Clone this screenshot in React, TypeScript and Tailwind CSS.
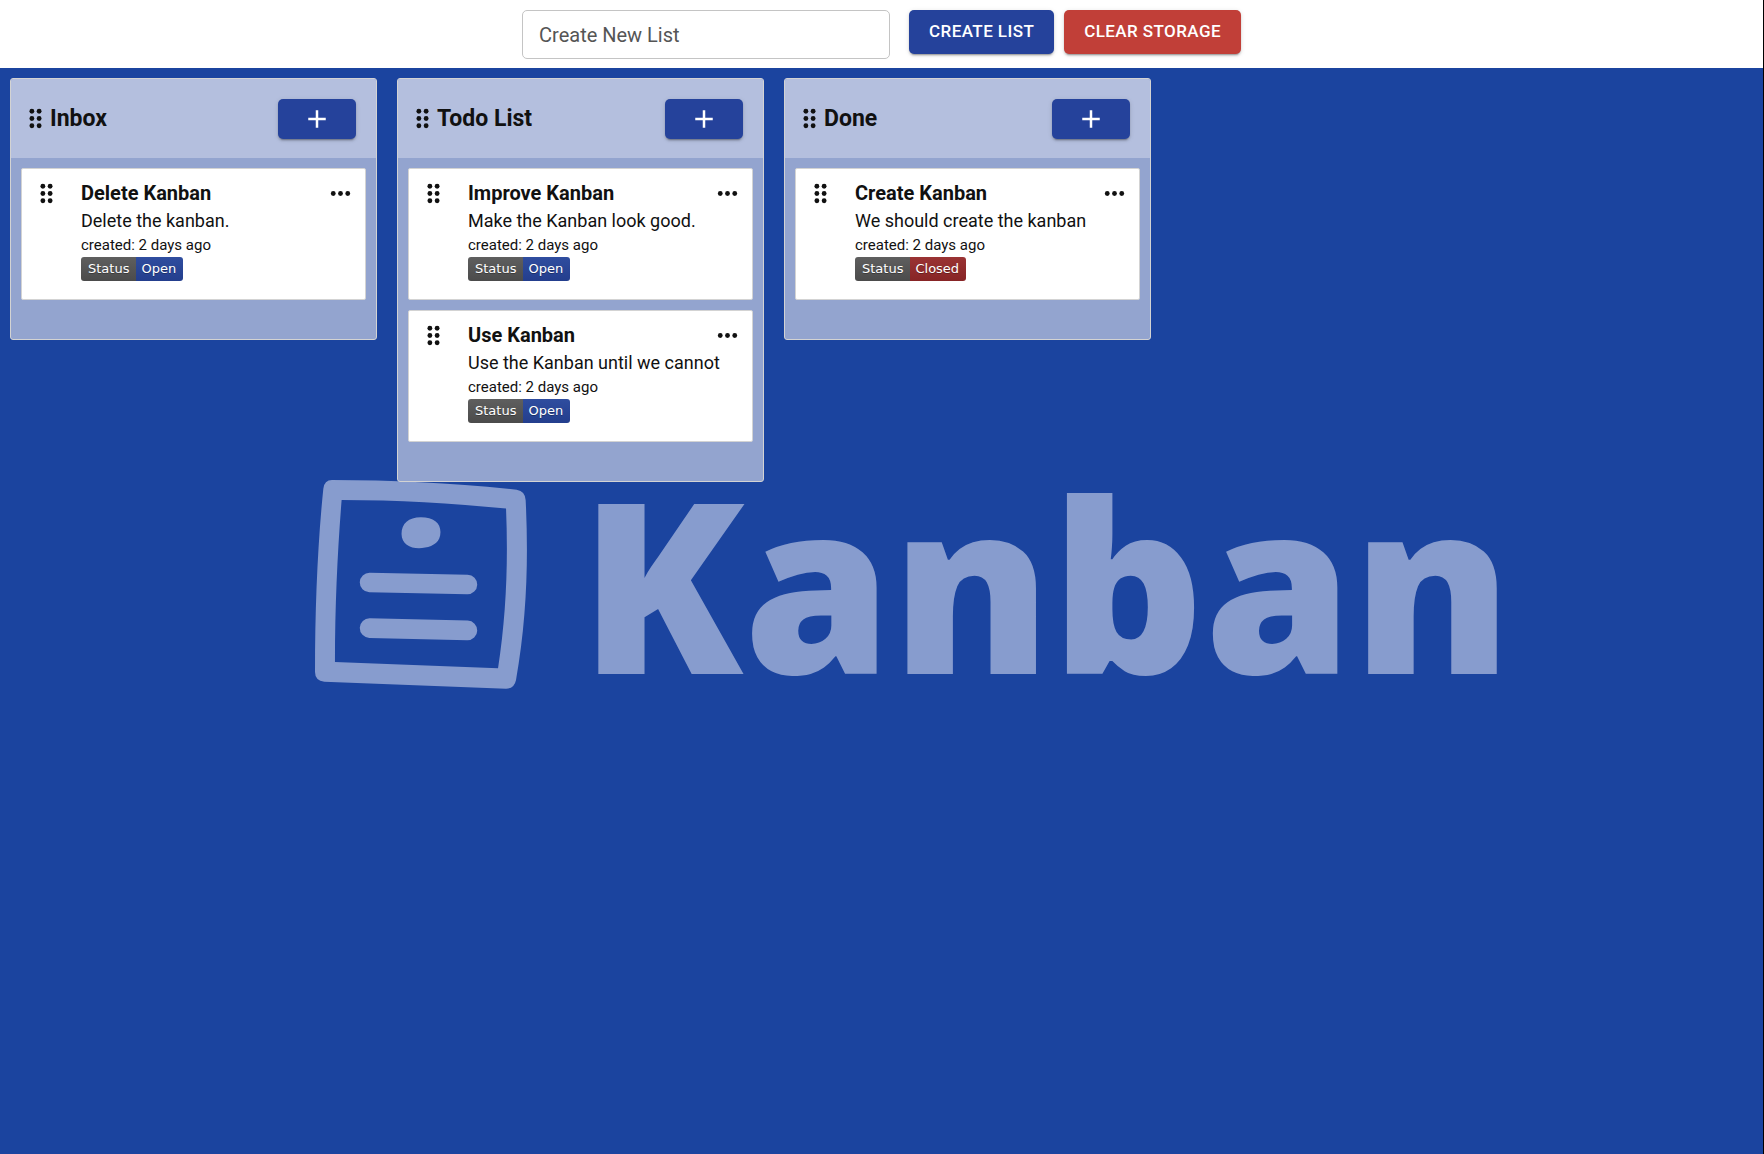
import React from "react";

type Card = { title: string; text: string; open: boolean };
type List = { name: string; cards: Card[] };

const lists: List[] = [
  { name: "Inbox", cards: [{ title: "Delete Kanban", text: "Delete the kanban.", open: true }] },
  {
    name: "Todo List",
    cards: [
      { title: "Improve Kanban", text: "Make the Kanban look good.", open: true },
      { title: "Use Kanban", text: "Use the Kanban until we cannot", open: true },
    ],
  },
  { name: "Done", cards: [{ title: "Create Kanban", text: "We should create the kanban", open: false }] },
];

const raised = "shadow-[0_3px_1px_-2px_rgba(0,0,0,0.2),0_2px_2px_0_rgba(0,0,0,0.14),0_1px_5px_0_rgba(0,0,0,0.12)]";

function DragIcon() {
  return (
    <svg viewBox="0 0 24 24" className="size-[29px] shrink-0" fill="currentColor" aria-hidden="true">
      {[6, 12, 18].map((y) => (
        <g key={y}>
          <circle cx="9" cy={y} r="2" />
          <circle cx="15" cy={y} r="2" />
        </g>
      ))}
    </svg>
  );
}

function StatusBadge({ open }: { open: boolean }) {
  return (
    <span className="flex h-6 w-fit overflow-hidden rounded-[3px] font-['DejaVu_Sans',sans-serif] text-[13px] leading-6 text-white [text-shadow:0_1px_0_rgba(1,1,1,0.3)]">
      <span className="bg-linear-to-b from-[#5f5f5f] to-[#4b4b4b] px-[7px]">Status</span>
      <span
        className={
          open
            ? "bg-linear-to-b from-[#2f4d9f] to-[#233e8d] pr-[7px] pl-[5px]"
            : "bg-linear-to-b from-[#9a3334] to-[#872425] pr-[7px] pl-[5px]"
        }
      >
        {open ? "Open" : "Closed"}
      </span>
    </span>
  );
}

function CardView({ card }: { card: Card }) {
  return (
    <article className="flex items-start rounded-xs border border-[#d3d3d3] bg-white px-[10px] pt-[10px] pb-[18px]">
      <DragIcon />
      <div className="ml-5 min-w-0 flex-1">
        <div className="flex items-center justify-between">
          <h3 className="text-[20px] leading-[29px] font-bold">{card.title}</h3>
          <button type="button" aria-label={`Options for ${card.title}`}>
            <svg viewBox="0 0 24 24" className="size-[29px]" fill="currentColor" aria-hidden="true">
              <circle cx="6" cy="12" r="2" />
              <circle cx="12" cy="12" r="2" />
              <circle cx="18" cy="12" r="2" />
            </svg>
          </button>
        </div>
        <p className="text-[18px] leading-[26px]">{card.text}</p>
        <p className="text-[15px] leading-[23px]">created: 2 days ago</p>
        <StatusBadge open={card.open} />
      </div>
    </article>
  );
}

function ListView({ list }: { list: List }) {
  return (
    <section className="w-[367px] overflow-hidden rounded-[3px] border border-[#d3d3d3] bg-[#93a4cf]">
      <header className="flex h-[79px] items-center bg-[#b4bfde] pr-5 pl-[10px]">
        <DragIcon />
        <h2 className="flex-1 text-[23px] leading-[29px] font-bold">{list.name}</h2>
        <button
          type="button"
          aria-label={`Add card to ${list.name}`}
          className={`flex h-10 w-[78px] items-center justify-center rounded-[5px] bg-[#25429b] text-white ${raised}`}
        >
          <svg viewBox="0 0 24 24" className="size-[30px]" fill="currentColor" aria-hidden="true">
            <path d="M19 13h-6v6h-2v-6H5v-2h6V5h2v6h6z" />
          </svg>
        </button>
      </header>
      <div className="flex flex-col gap-[10px] px-[10px] pt-[10px] pb-[39px]">
        {list.cards.map((card) => (
          <CardView key={card.title} card={card} />
        ))}
      </div>
    </section>
  );
}

function Watermark() {
  return (
    <div className="absolute inset-x-0 top-[354px] flex items-end justify-center pl-16 text-[#879cce]" aria-hidden="true">
      <svg viewBox="44 59 640 628" className="mb-[53px] h-[209px] w-[213px] shrink-0" fill="currentColor">
        <path
          fillRule="evenodd"
          d="M95 59C280 59 460 68 650 88Q676 92 677 120C686 300 680 480 648 660Q643 686 618 686L72 665Q44 662 44 636C44 440 52 250 69 85Q72 59 95 59ZM124 119C290 119 455 128 618 145C625 310 618 470 594 625L104 606C104 430 112 270 124 119Z"
        />
        <path d="M362 171C400 171 421 188 421 215C421 245 400 257 375 262C340 270 304 255 304 221C304 190 325 171 362 171Z" />
        <path d="M208 367L502 373M208 504L502 511" stroke="currentColor" strokeWidth="59" strokeLinecap="round" />
      </svg>
      <span className="ml-[52px] text-[238px] leading-[320px] font-extrabold font-['Open_Sans',sans-serif]">Kanban</span>
    </div>
  );
}

export default function App() {
  return (
    <div className="flex min-h-screen flex-col border-r border-black bg-[#1b449f] font-[Roboto,sans-serif] text-[#111]">
      <header className="flex h-[68px] items-start justify-center bg-white pt-[10px]">
        <input
          type="text"
          aria-label="Create New List"
          placeholder="Create New List"
          className="h-[49px] w-[368px] rounded-[5px] border border-[#c4c4c4] px-4 text-[20px] placeholder:text-[#555]"
        />
        <button
          type="button"
          className={`ml-[19px] h-11 rounded-[5px] bg-[#25429b] px-5 text-[17px] font-medium tracking-wide text-white uppercase ${raised}`}
        >
          Create List
        </button>
        <button
          type="button"
          className={`ml-[10px] h-11 rounded-[5px] bg-[#c13f38] px-5 text-[17px] font-medium tracking-wide text-white uppercase ${raised}`}
        >
          Clear Storage
        </button>
      </header>
      <main className="relative flex-1">
        <Watermark />
        <div className="relative flex flex-wrap items-start gap-5 p-[10px]">
          {lists.map((list) => (
            <ListView key={list.name} list={list} />
          ))}
        </div>
      </main>
    </div>
  );
}
